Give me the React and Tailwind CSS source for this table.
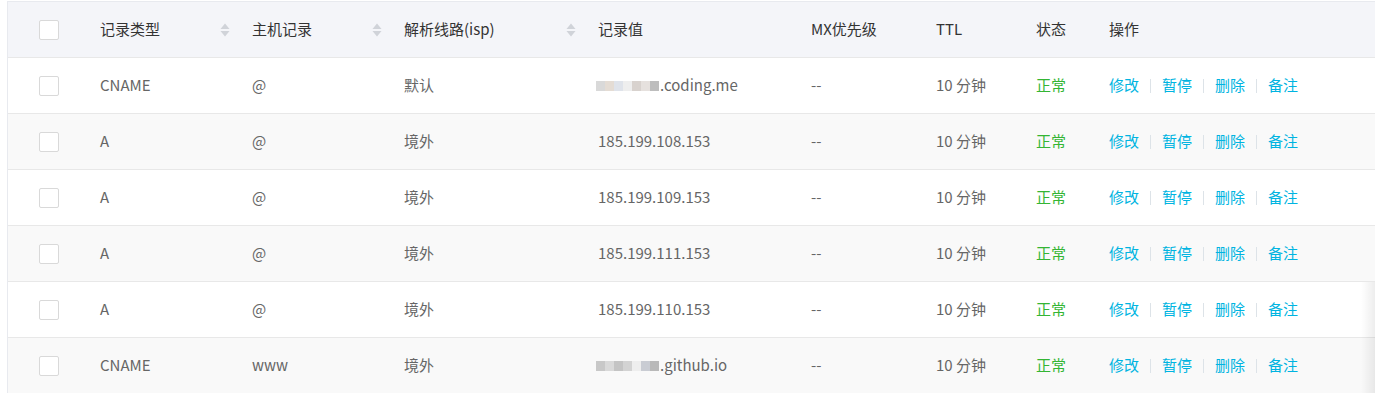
import React from "react";

const rows = [
  { type: "CNAME", host: "@", line: "默认", value: ".coding.me", blur: "a" },
  { type: "A", host: "@", line: "境外", value: "185.199.108.153" },
  { type: "A", host: "@", line: "境外", value: "185.199.109.153" },
  { type: "A", host: "@", line: "境外", value: "185.199.111.153" },
  { type: "A", host: "@", line: "境外", value: "185.199.110.153" },
  { type: "CNAME", host: "www", line: "境外", value: ".github.io", blur: "b" },
];

const cols = "grid grid-cols-[82px_152px_152px_194px_213px_125px_100px_73px_1fr]";

function Checkbox() {
  return <div className="w-5 h-5 border border-[#d9d9d9] bg-white rounded-[2px]" />;
}

function SortIcon() {
  return (
    <svg width="10" height="16" viewBox="0 0 10 16" className="shrink-0">
      <path d="M5 1.5 L9.5 7 L0.5 7 Z" fill="#d0d3d9" />
      <path d="M5 14.5 L9.5 9 L0.5 9 Z" fill="#d0d3d9" />
    </svg>
  );
}

function Blur({ kind }) {
  const a = ["#d9d9d9", "#e4dcd4", "#dfe3ea", "#eeeeee", "#d8d2ce", "#e6e1de", "#bdbdbd"];
  const b = ["#c8c8c8", "#d9d9d9", "#c4c4c4", "#d3d3d3", "#eeeeee", "#c9ccd3", "#b9b9b9"];
  const c = kind === "a" ? a : b;
  return (
    <span className="inline-flex items-center -ml-[2px] mr-px">
      {c.map((col, i) => (
        <span key={i} className="inline-block w-[9px] h-[10px]" style={{ background: col }} />
      ))}
    </span>
  );
}

function HeadCell({ children, sort }) {
  return (
    <div className="flex items-center justify-between pl-[10px] pr-[12px]">
      <span>{children}</span>
      {sort && <SortIcon />}
    </div>
  );
}

function Sep() {
  return <span className="w-px h-[14px] bg-[#dde3e8] mx-[11px]" />;
}

export default function App() {
  return (
    <div className="relative w-[1375px] h-[393px] overflow-hidden bg-white pt-px pl-[7px] text-[15px] font-['Noto_Sans_CJK_SC','Noto_Sans',sans-serif]">
      <div className="border-l border-t border-[#e8eaef]">
        <div className={`${cols} h-[56px] bg-[#f4f5f9] border-b border-[#e8e8e8] text-[#333]`}>
          <div className="flex items-center justify-center">
            <Checkbox />
          </div>
          <HeadCell sort>记录类型</HeadCell>
          <HeadCell sort>主机记录</HeadCell>
          <HeadCell sort>解析线路(isp)</HeadCell>
          <HeadCell>记录值</HeadCell>
          <HeadCell>MX优先级</HeadCell>
          <HeadCell>TTL</HeadCell>
          <HeadCell>状态</HeadCell>
          <HeadCell>操作</HeadCell>
        </div>
        {rows.map((r, i) => (
          <div
            key={i}
            className={`${cols} h-[56px] border-b border-[#e8e8e8] text-[#666] ${i % 2 ? "bg-[#f9f9f9]" : "bg-white"}`}
          >
            <div className="flex items-center justify-center">
              <Checkbox />
            </div>
            <div className="flex items-center pl-[10px]">{r.type}</div>
            <div className="flex items-center pl-[10px]">{r.host}</div>
            <div className="flex items-center pl-[10px]">{r.line}</div>
            <div className="flex items-center pl-[10px]">
              {r.blur && <Blur kind={r.blur} />}
              {r.value}
            </div>
            <div className="flex items-center pl-[10px]">--</div>
            <div className="flex items-center pl-[10px]">10 分钟</div>
            <div className="flex items-center pl-[10px] text-[#34b534]">正常</div>
            <div className="flex items-center pl-[10px] text-[#00b4e1]">
              <span>修改</span>
              <Sep />
              <span>暂停</span>
              <Sep />
              <span>删除</span>
              <Sep />
              <span>备注</span>
            </div>
          </div>
        ))}
      </div>
      <div className="absolute right-0 top-[282px] bottom-0 w-[14px] bg-gradient-to-r from-transparent to-[#00000012]" />
    </div>
  );
}
